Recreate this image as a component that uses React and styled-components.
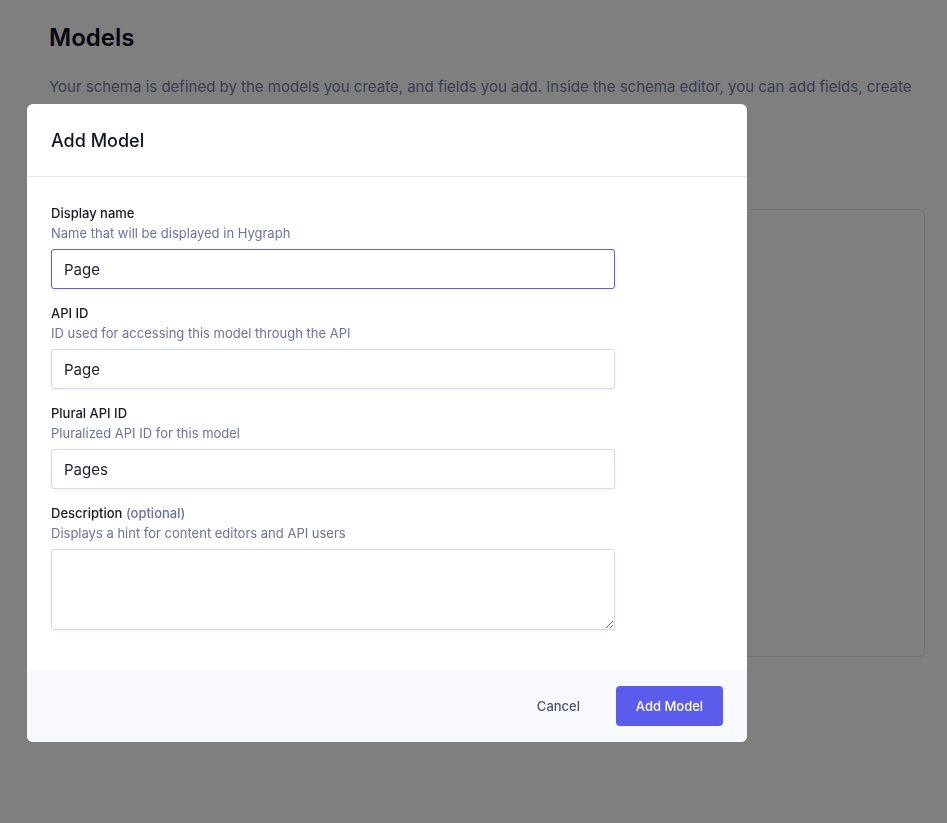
import React from "react";
import styled, { createGlobalStyle } from "styled-components";

const Global = createGlobalStyle`
  html, body {
    margin: 0;
    padding: 0;
    background: #ffffff;
    font-family: Inter, "Noto Sans", sans-serif;
    -webkit-font-smoothing: antialiased;
  }
  * { box-sizing: border-box; }
`;

const fields = [
  { label: "Display name", hint: "Name that will be displayed in Hygraph", value: "Page", focused: true },
  { label: "API ID", hint: "ID used for accessing this model through the API", value: "Page" },
  { label: "Plural API ID", hint: "Pluralized API ID for this model", value: "Pages" },
];

const App = () => {
  return (
    <>
      <Global />
      <Page>
        <Title>Models</Title>
        <Intro>
          Your schema is defined by the models you create, and fields you add. Inside the schema editor, you can add fields, create
          relations between models, and configure validations.
        </Intro>
        <Card />
      </Page>

      <Overlay>
        <Modal>
          <Header>
            <h2>Add Model</h2>
          </Header>
          <Body>
            {fields.map((f) => (
              <Field key={f.label}>
                <Label>{f.label}</Label>
                <Hint>{f.hint}</Hint>
                <Input $focused={f.focused} defaultValue={f.value} />
              </Field>
            ))}
            <Field>
              <Label>
                Description <span>(optional)</span>
              </Label>
              <Hint>Displays a hint for content editors and API users</Hint>
              <TextArea />
            </Field>
          </Body>
          <Footer>
            <GhostButton>Cancel</GhostButton>
            <PrimaryButton>Add Model</PrimaryButton>
          </Footer>
        </Modal>
      </Overlay>
    </>
  );
};

export default App;

const Page = styled.main`
  padding: 22px 22px 0 49px;
  min-height: 823px;
`;

const Title = styled.h1`
  margin: 0;
  font-size: 24px;
  line-height: 32px;
  font-weight: 600;
  color: #0c0d1c;
`;

const Intro = styled.p`
  margin: 20px 0 0;
  font-size: 15px;
  line-height: 25px;
  color: #777c9f;
`;

const Card = styled.div`
  margin-top: 85px;
  height: 448px;
  border: 1px solid #e2e4f1;
  border-radius: 6px;
`;

const Overlay = styled.div`
  position: fixed;
  inset: 0;
  background: rgba(0, 0, 0, 0.5);
  padding: 104px 0 0 27px;
`;

const Modal = styled.div`
  width: 720px;
  background: #ffffff;
  border-radius: 6px;
  overflow: hidden;
`;

const Header = styled.div`
  height: 73px;
  padding: 0 24px;
  display: flex;
  align-items: center;
  border-bottom: 1px solid #e3e6f6;
  h2 {
    margin: 0;
    font-size: 18px;
    font-weight: 500;
    color: #141527;
  }
`;

const Body = styled.div`
  padding: 26px 24px 40px;
  display: flex;
  flex-direction: column;
  gap: 14px;
`;

const Field = styled.div`
  display: flex;
  flex-direction: column;
`;

const Label = styled.div`
  font-size: 13px;
  line-height: 20px;
  font-weight: 500;
  color: #171829;
  span {
    color: #6a71a8;
  }
`;

const Hint = styled.div`
  font-size: 13px;
  line-height: 20px;
  color: #6c72a5;
  margin-bottom: 6px;
`;

const Input = styled.input`
  width: 564px;
  height: 40px;
  padding: 0 12px;
  font-family: inherit;
  font-size: 15px;
  color: #1d1e30;
  border: 1px solid ${(p) => (p.$focused ? "#5b5ef0" : "#d6d8ef")};
  border-radius: 3px;
  box-shadow: 0 1px 3px rgba(30, 35, 90, 0.06);
  outline: none;
`;

const TextArea = styled.textarea`
  width: 564px;
  height: 81px;
  padding: 10px 12px;
  font-family: inherit;
  font-size: 15px;
  border: 1px solid #d6d8ef;
  border-radius: 3px;
  box-shadow: 0 1px 3px rgba(30, 35, 90, 0.06);
  outline: none;
  resize: vertical;
`;

const Footer = styled.div`
  height: 72px;
  background: #f8f9fe;
  display: flex;
  align-items: center;
  justify-content: flex-end;
  padding: 0 24px;
  gap: 20px;
`;

const GhostButton = styled.button`
  height: 40px;
  padding: 0 16px;
  background: transparent;
  border: none;
  font-family: inherit;
  font-size: 13px;
  font-weight: 500;
  color: #4d5275;
`;

const PrimaryButton = styled.button`
  height: 40px;
  width: 107px;
  background: #5b5cec;
  border: none;
  border-radius: 4px;
  font-family: inherit;
  font-size: 13px;
  font-weight: 500;
  color: #ffffff;
`;
